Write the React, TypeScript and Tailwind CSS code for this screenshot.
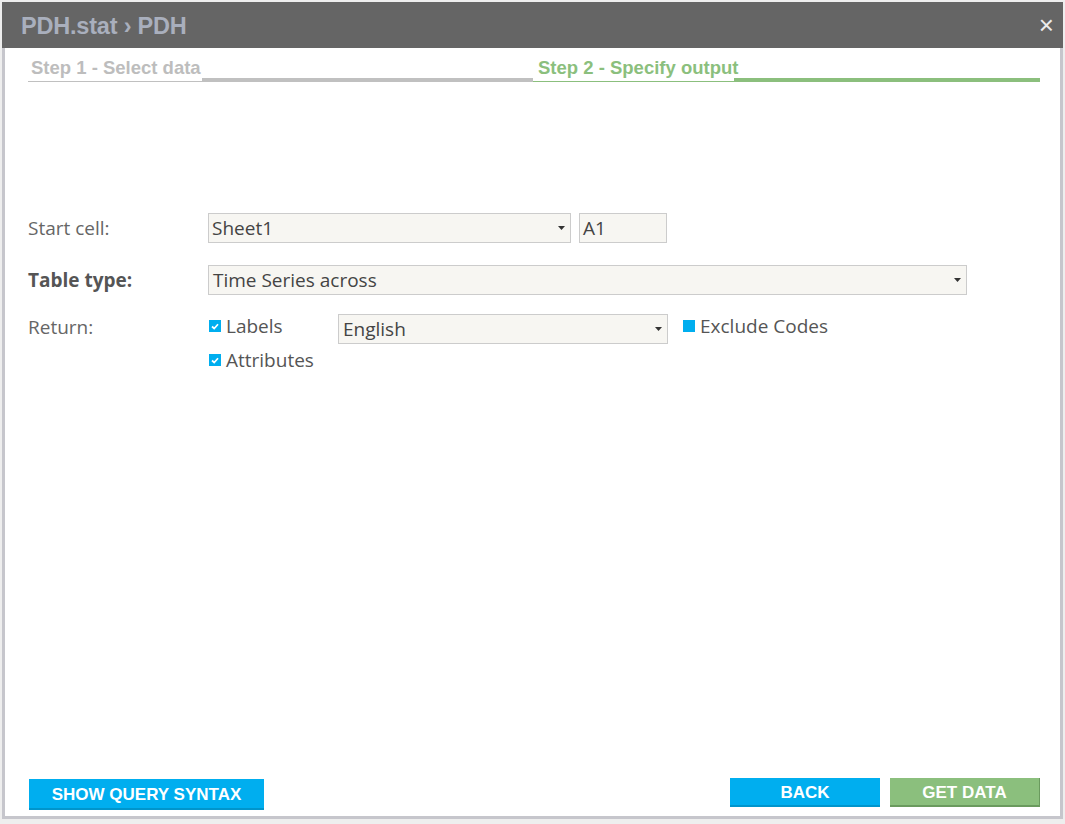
import React from "react";

const Arrow = () => (
  <svg width="7" height="4" viewBox="0 0 7 4" className="shrink-0">
    <path d="M0 0 L7 0 L3.5 4 Z" fill="#333" />
  </svg>
);

const Check = ({ checked }: { checked: boolean }) => (
  <span className="w-[12px] h-[12px] bg-[#00aeef] flex items-center justify-center shrink-0">
    {checked && (
      <svg width="8" height="7" viewBox="0 0 8 7">
        <path d="M1 3.5 L3.2 5.5 L7 1.2" stroke="#fff" strokeWidth="1.7" fill="none" />
      </svg>
    )}
  </span>
);

export default function App() {
  const ff = { fontFamily: '"Open Sans", "DejaVu Sans", sans-serif' };
  const arial = { fontFamily: '"Liberation Sans", Arial, sans-serif' };
  return (
    <div className="w-[1065px] h-[824px] bg-[#eeeeee] pt-[2px] pl-[2px] overflow-hidden">
      <div className="w-[1061px] h-[817px] flex flex-col">
        <div className="h-[46px] bg-[#656565] flex items-center justify-between pl-[19px] pr-[9px] pt-[4px]" style={arial}>
          <span className="text-[23.5px] font-bold text-[#a9afbd] tracking-[-0.2px]">PDH.stat › PDH</span>
          <span className="text-[26px] text-[#ececec] leading-none -mt-[4px]">×</span>
        </div>
        <div className="flex-1 bg-white border-l-[3px] border-r-[3px] border-b-[3px] border-[#c6c6cc] flex flex-col">
          <div className="flex items-end ml-[23px] mt-[9px] w-[1012px]" style={arial}>
            <div className="w-[174px] border-b border-[#c0c0c0] pl-[3px] text-[18.5px] font-bold text-[#bdbdbd] leading-[22px] pb-[2px] whitespace-nowrap">
              Step 1 - Select data
            </div>
            <div className="w-[331px] h-[4px] bg-[#c0c0c0]" />
            <div className="w-[201px] border-b border-[#8bbf7d] pl-[5px] text-[18.5px] font-bold text-[#8bbf7d] leading-[22px] pb-[2px] whitespace-nowrap">
              Step 2 - Specify output
            </div>
            <div className="flex-1 h-[4px] bg-[#8bbf7d]" />
          </div>

          <div className="flex flex-col ml-[23px] mt-[131px]" style={ff}>
            <div className="flex items-center h-[30px]">
              <div className="w-[180px] text-[19px] text-[#666]">Start cell:</div>
              <div className="w-[363px] h-[30px] bg-[#f7f6f2] border border-[#cccccc] flex items-center justify-between pl-[3px] pr-[5px] text-[19px] text-[#444]">
                <span>Sheet1</span>
                <Arrow />
              </div>
              <div className="ml-[8px] w-[88px] h-[30px] bg-[#f7f6f2] border border-[#cccccc] flex items-center pl-[3px] text-[19px] text-[#444]">
                A1
              </div>
            </div>

            <div className="flex items-center h-[30px] mt-[22px]">
              <div className="w-[180px] text-[19px] font-bold text-[#555]">Table type:</div>
              <div className="w-[759px] h-[30px] bg-[#f7f6f2] border border-[#cccccc] flex items-center justify-between pl-[4px] pr-[5px] text-[19px] text-[#444]">
                <span>Time Series across</span>
                <Arrow />
              </div>
            </div>

            <div className="flex items-start mt-[19px]">
              <div className="w-[180px] text-[19px] text-[#666] leading-[26px]">Return:</div>
              <div className="flex flex-col">
                <div className="flex items-start">
                  <div className="w-[130px] flex items-center gap-[5px] mt-[2px] pl-[1px]">
                    <Check checked />
                    <span className="text-[19px] text-[#555] leading-[20px]">Labels</span>
                  </div>
                  <div className="w-[330px] h-[30px] bg-[#f7f6f2] border border-[#cccccc] flex items-center justify-between pl-[4px] pr-[5px] text-[19px] text-[#444]">
                    <span>English</span>
                    <Arrow />
                  </div>
                  <div className="ml-[15px] flex items-center gap-[5px] mt-[2px]">
                    <Check checked={false} />
                    <span className="text-[19px] text-[#555] leading-[20px]">Exclude Codes</span>
                  </div>
                </div>
                <div className="flex items-center gap-[5px] mt-[6px] pl-[1px]">
                  <Check checked />
                  <span className="text-[19px] text-[#555] leading-[20px]">Attributes</span>
                </div>
              </div>
            </div>
          </div>

          <div className="flex-1" />
          <div className="flex items-start justify-between ml-[24px] mr-[20px] mb-[6px]" style={arial}>
            <button className="w-[235px] h-[31px] bg-[#00aeef] border-b-2 border-[#0095cc] text-white font-bold text-[17px] pt-[2px]">
              SHOW QUERY SYNTAX
            </button>
            <div className="flex gap-[10px] -mt-[1px]">
              <button className="w-[150px] h-[29px] bg-[#00aeef] border-b-2 border-[#0095cc] text-white font-bold text-[17px] pt-[2px]">
                BACK
              </button>
              <button className="w-[150px] h-[29px] bg-[#8bbf7d] border-b-2 border-r border-[#6a9a5e] text-white font-bold text-[17px] pt-[2px]">
                GET DATA
              </button>
            </div>
          </div>
        </div>
      </div>
    </div>
  );
}
